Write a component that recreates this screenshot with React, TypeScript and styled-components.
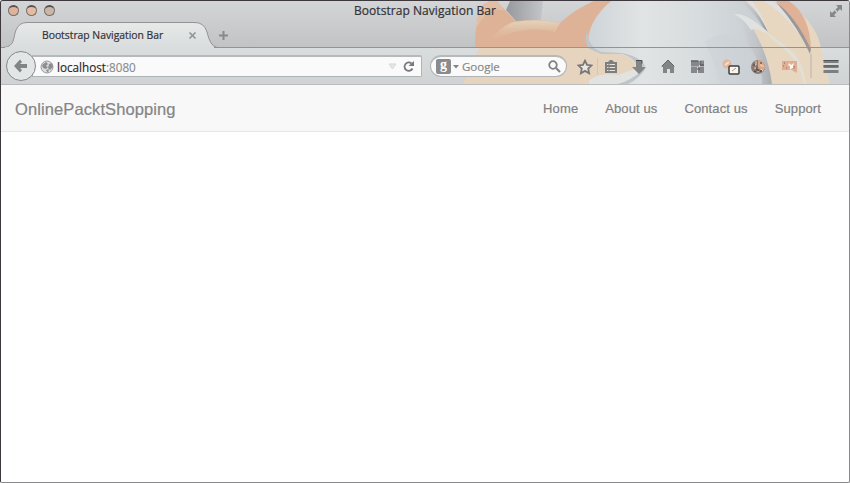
import React from "react";
import styled, { createGlobalStyle } from "styled-components";

const GlobalStyle = createGlobalStyle`
  * { box-sizing: border-box; }
  body { margin: 0; overflow: hidden; background: #fff; }
`;

const uiFont = `"Open Sans", "Noto Sans", sans-serif`;

const BrowserWindow = styled.main`
  width: 850px;
  height: 483px;
  display: flex;
  flex-direction: column;
  border: 1px solid #8a8a8c;
  border-top-color: #3c383d;
  border-left-color: #3c383d;
  border-radius: 3px 3px 2px 2px;
  background: #fff;
  overflow: hidden;
`;

const Chrome = styled.header`
  position: relative;
  flex: none;
  height: 84px;
  display: flex;
  flex-direction: column;
  background: linear-gradient(#d3d5d6 0, #c2c3c5 46px, #dadddd 47px, #cfd3d4 83px);
  border-bottom: 1px solid #b9bbbd;
  font-family: ${uiFont};
`;

const Artwork = styled.svg`
  position: absolute;
  inset: 0;
  width: 848px;
  height: 83px;
`;

const TitleBar = styled.div`
  position: relative;
  height: 21px;
  flex: none;
  display: grid;
  grid-template-columns: 100px 1fr 100px;
  align-items: center;
  padding: 0 7px 1px;
`;

const Lights = styled.div`
  display: flex;
  gap: 7px;
  margin-top: -1px;
`;

const Light = styled.span<{ $tone: string }>`
  width: 11px;
  height: 11px;
  border-radius: 50%;
  border: 1px solid #77706d;
  border-top: 2px solid #56504f;
  background: ${(p) => p.$tone};
`;

const Title = styled.div<{ $size: number; $spacing: number }>`
  font-size: ${(p) => p.$size}px;
  letter-spacing: ${(p) => p.$spacing}px;
  line-height: 16px;
  white-space: nowrap;
  color: #343236;
  text-align: center;
  -webkit-text-stroke: 0.2px #343236;
`;

const Expand = styled.svg`
  justify-self: end;
  width: 14px;
  height: 14px;
  margin-right: -1px;
`;

const TabStrip = styled.div`
  position: relative;
  height: 26px;
  flex: none;
  display: flex;
`;

const Tab = styled.div`
  width: 214px;
  display: flex;
  align-items: center;
  justify-content: space-between;
  padding: 0 17px 0 41px;
`;

const CloseIcon = styled.svg`
  width: 9px;
  height: 9px;
  flex: none;
  margin-right: 1px;
`;

const AddIcon = styled.svg`
  width: 11px;
  height: 11px;
  margin: 8px 0 0 3px;
`;

const Toolbar = styled.div`
  position: relative;
  height: 36px;
  flex: none;
  display: flex;
  align-items: center;
  padding: 0 11px 0 5px;
`;

const BackButton = styled.button`
  position: relative;
  z-index: 1;
  width: 30px;
  height: 30px;
  padding: 0;
  flex: none;
  display: grid;
  place-items: center;
  border: 1px solid #858789;
  border-radius: 50%;
  background: #e3e6e6;
`;

const Field = styled.div<{ $round?: boolean }>`
  display: flex;
  align-items: center;
  flex: none;
  height: 22px;
  width: ${(p) => (p.$round ? 137 : 390)}px;
  margin-left: ${(p) => (p.$round ? 8 : -4)}px;
  padding: ${(p) => (p.$round ? "0 5px" : "0 6px 0 7px")};
  border: 1px solid #b0b3b5;
  border-top: 2px solid #b6b9bb;
  border-radius: ${(p) => (p.$round ? "11px" : "0 2px 2px 0")};
  background: #fafafa;
`;

const FieldText = styled.div<{ $muted?: boolean }>`
  flex: 1;
  font-size: ${(p) => (p.$muted ? 11.5 : 11.7)}px;
  line-height: 16px;
  color: ${(p) => (p.$muted ? "#858587" : "#29272a")};
  -webkit-text-stroke: 0.15px currentColor;
`;

const Port = styled.span`
  color: #8a8b8d;
`;

const EngineBadge = styled.span`
  width: 15px;
  height: 15px;
  border-radius: 2px;
  background: #8a8b8c;
  color: #fff;
  font: bold 14px/11px "Liberation Serif", serif;
  text-align: center;
`;

const Glyph = styled.svg<{ $w?: number; $h?: number; $ml?: number }>`
  width: ${(p) => p.$w ?? 16}px;
  height: ${(p) => p.$h ?? 16}px;
  margin-left: ${(p) => p.$ml ?? 0}px;
  flex: none;
`;

const ActionGroup = styled.div`
  display: flex;
  align-items: center;
  padding-top: 1px;
`;

const Divider = styled.span`
  width: 1px;
  height: 17px;
  margin: 0 0 0 4px;
  background: #d0c6ba;
`;

const Navbar = styled.nav`
  height: 47px;
  flex: none;
  display: flex;
  align-items: center;
  justify-content: space-between;
  padding: 2px 28px 0 14px;
  background: #f8f8f8;
  border-bottom: 1px solid #e7e7e7;
  font-family: "Liberation Sans", Arial, sans-serif;
`;

const Brand = styled.a`
  font-size: 16.5px;
  letter-spacing: 0.1px;
  line-height: 20px;
  color: #858585;
  -webkit-text-stroke: 0.2px #858585;
`;

const Links = styled.div`
  display: flex;
  gap: 27px;
`;

const NavLink = styled.a`
  font-size: 13px;
  letter-spacing: 0.11px;
  line-height: 20px;
  color: #828282;
  -webkit-text-stroke: 0.2px #828282;
`;

const FoxArtwork = () => (
  <Artwork viewBox="1 1 848 83" aria-hidden="true">
    <defs>
      <linearGradient id="sky" x1="0" x2="1">
        <stop offset="0" stopColor="#cdd3d7" />
        <stop offset=".3" stopColor="#e1e4e4" />
        <stop offset=".6" stopColor="#d7dcde" />
        <stop offset="1" stopColor="#c5cacf" />
      </linearGradient>
      <linearGradient id="edge" x1="0" x2="1">
        <stop offset="0" stopColor="#97989b" />
        <stop offset="1" stopColor="#c3c5c8" />
      </linearGradient>
      <linearGradient id="crown" x1="0" x2="0" y1="0" y2="1">
        <stop offset="0" stopColor="#e4d3bd" />
        <stop offset=".5" stopColor="#e0bda1" />
        <stop offset="1" stopColor="#deb297" />
      </linearGradient>
      <linearGradient id="shade" x1="0" x2="1">
        <stop offset="0" stopColor="#c7c9cc" stopOpacity="0" />
        <stop offset=".6" stopColor="#b9bbbe" />
        <stop offset="1" stopColor="#939598" />
      </linearGradient>
      <linearGradient id="tab" x1="0" x2="0" y1="0" y2="1">
        <stop offset="0" stopColor="#e7e9e9" />
        <stop offset="1" stopColor="#dadddd" />
      </linearGradient>
    </defs>
    <path d="M586 48Q587 20 612 1H748Q770 30 774 84H586Z" fill="url(#sky)" />
    <path d="M510 1H543L541 20L517 22L506 10Z" fill="url(#edge)" />
    <path d="M475 48Q475 14 484 4L490 1H497Q506 12 516 21Q538 18 560 23Q575 9 594 1H611Q586 22 588 48Z" fill="#deb297" />
    <path d="M475 30Q477 11 484 4L490 1H497L505 11Q492 7 484 17Q479 23 475 30Z" fill="#e2c3aa" opacity=".7" />
    <path d="M491 40Q500 26 514 22Q538 18 560 23L555 32Q530 24 491 40Z" fill="url(#crown)" />
    <path d="M463 84L479 48H588Q593 53 608 53Q637 54 636 70Q625 77 605 80L590 84Z" fill="#e6d4bf" />
    <path d="M588 48Q584 39 587 30Q588 47 601 52L621 53Q640 56 645 66L637 70Q637 58 622 54L601 54Z" fill="#c0c5c9" />
    <path d="M589 81Q598 72 618 75Q632 70 643 66Q636 81 620 84H589Z" fill="#e1e3e1" />
    <path d="M642 70Q632 80 618 84H628Q640 78 646 68Z" fill="#bfc4c8" />
    <path d="M705 42Q720 31 738 36Q760 55 764 84H720Q716 66 705 42Z" fill="#cbd2d6" opacity=".5" />
    <path d="M737 18Q750 20 764 44L774 84H762Q763 66 748 43Q745 26 737 18Z" fill="url(#shade)" opacity=".65" />
    <path d="M746 1H784Q816 20 821 48L830 84H772Q769 60 758 38Q752 26 747 21L768 32Z" fill="#e7d7c1" />
    <path d="M740 1H748Q760 14 768 32L764 29Q756 14 740 1Z" fill="url(#shade)" />
    <path d="M746 1H752Q764 17 768 32Q760 13 746 1Z" fill="#e0e1df" />
    <path d="M734 14Q744 13 757 23L768 32L765 33Q755 27 751 30Q744 19 734 14Z" fill="#e0e2e1" />
    <path d="M760 28Q774 36 789 49Q802 58 806 84H804Q799 61 784 49Z" fill="#e2e0d6" />
    <path d="M764 1H772Q801 20 810 51Q790 17 764 1Z" fill="#dfe0df" />
    <path d="M776 1H789Q810 15 811 49Q802 28 776 1Z" fill="#dfb297" />
    <path d="M776 2Q796 17 811 49L810 54Q798 27 776 2Z" fill="#9c9895" />
    <path d="M811 54V78" stroke="#b9b2aa" />
    <path d="M0 47.5H4C15 46 13 38 16 30Q19 22 27 22.5H194Q204 22 207 32Q210 45 216 48H0Z" fill="url(#tab)" />
    <path d="M0 47.5H4C15 46 13 38 16 30Q19 22.5 27 22.5H194Q204 22 207 32Q210 46 217 47.5H850" fill="none" stroke="#929395" />
    <path d="M1 48H215" stroke="#dadddd" strokeWidth="1.5" />
    <path d="M1 47.5H5M214 47.5H218" stroke="#929395" />
  </Artwork>
);

const ToolbarIcons = () => (
  <ActionGroup>
    <Glyph $ml={10} viewBox="0 0 16 16">
      <path d="m8 1.7 2 4.2 4.6.5-3.4 3.1.9 4.7L8 11.9l-4.1 2.3.9-4.7-3.4-3.1L6 5.9Z" fill="#eee7df" stroke="#77777a" strokeWidth="1.8" />
    </Glyph>
    <Divider />
    <Glyph $ml={5} viewBox="0 0 16 16">
      <path d="M2 3h3l2-2h2l2 2h3v11H2Z" fill="#7d7e80" />
      <path d="M4 5.5h1.5m1 0H12M4 8.5h1.5m1 0H12M4 11.5h1.5m1 0H12" stroke="#e9e0d7" strokeWidth="1.2" />
    </Glyph>
    <Glyph $ml={12} viewBox="0 0 16 16">
      <path d="M5 1h6v7h4l-7 7-7-7h4Z" fill="#828486" />
      <path d="M5 1.5h6v3" fill="none" stroke="#4b4b4f" />
    </Glyph>
    <Glyph $ml={13} viewBox="0 0 16 16">
      <path d="M8 1 1 8h2v6h4v-4h3v4h4V8h1Z" fill="#828486" />
      <path d="m2 7 6-6 6 6" fill="none" stroke="#656669" />
    </Glyph>
    <Glyph $ml={14} viewBox="0 0 16 16">
      <path d="M1 1.5h8v6H1zm9 0h4v6h-4zM1 8h6v6H1zm7 0h6v6H8z" fill="#85878a" />
      <path d="M1 2h7M10 2v4h4M7 10h3" stroke="#505155" fill="none" />
    </Glyph>
    <Glyph $w={19} $h={18} $ml={15} viewBox="0 0 19 18">
      <circle cx="6" cy="6" r="4.5" fill="#e2b69a" />
      <path d="m4 7 4-3" stroke="#f2dfcf" strokeWidth="2" />
      <rect x="8" y="8" width="10" height="8" rx="1" fill="#f8f5ee" stroke="#413e3e" strokeWidth="1.5" />
      <path d="m11 13 4-3" stroke="#b59482" />
    </Glyph>
    <Glyph $ml={10} viewBox="0 0 16 16">
      <circle cx="8" cy="8" r="7" fill="#8a7a72" />
      <path d="M8 1a7 7 0 0 1 7 7 7 7 0 0 1-3 5L8 8Z" fill="#dba789" />
      <path d="M6 2v4H3m8-3v4h3M4 9h4v4m3-3 2 2" stroke="#ead3bf" fill="none" />
      <path d="M3 6h2m2 2v3h2m2-8v2M4 12l2 1m4-1h2" stroke="#4d494a" fill="none" strokeWidth="1.3" />
    </Glyph>
    <Glyph $w={17} $ml={15} viewBox="0 0 17 16">
      <path d="M1 2h15v10l-1 2-4-3H1Z" fill="#dfae93" />
      <path d="m8 4 2 2 3-2-1 3 2 3-3-1-2 2V7L7 6Z" fill="#fff7ed" />
      <path d="M3 4h1m1 5h1M2 7h1m10 0v3" stroke="#816f67" />
    </Glyph>
    <Glyph $ml={25} viewBox="0 0 16 16">
      <path d="M.5 2.5h15M.5 7.5h15M.5 12.5h15" stroke="#7d7e81" strokeWidth="2.8" />
      <path d="M.5 1.5h15M.5 7h15" stroke="#525357" />
    </Glyph>
  </ActionGroup>
);

export default function App() {
  return (
    <>
      <GlobalStyle />
      <BrowserWindow>
        <Chrome>
          <FoxArtwork />
          <TitleBar>
            <Lights>
              <Light $tone="#dfb39a" />
              <Light $tone="#e5bca2" />
              <Light $tone="#c9b6a8" />
            </Lights>
            <Title $size={12} $spacing={0.05}>Bootstrap Navigation Bar</Title>
            <Expand viewBox="0 0 14 14">
              <path d="M7 1h6v6l-2-2-3 3-2-2 3-3ZM1 7l2 2 3-3 2 2-3 3 2 2H1Z" fill="#85878a" />
              <path d="m6 6 2 2" stroke="#cfd1d3" strokeWidth="1.5" />
            </Expand>
          </TitleBar>
          <TabStrip>
            <Tab>
              <Title $size={10.4} $spacing={-0.03}>Bootstrap Navigation Bar</Title>
              <CloseIcon viewBox="0 0 9 9"><path d="m1.5 1.5 6 6m0-6-6 6" stroke="#929496" strokeWidth="1.7" /></CloseIcon>
            </Tab>
            <AddIcon viewBox="0 0 11 11"><path d="M5.5 1v9M1 5.5h9" stroke="#87898b" strokeWidth="2" /></AddIcon>
          </TabStrip>
          <Toolbar>
            <BackButton aria-label="Back">
              <Glyph viewBox="0 0 16 16"><path d="m7 1.5-6 6.5 6 6.5 2-2.5-2-2h7V6H7l2-2Z" fill="#828486" /></Glyph>
            </BackButton>
            <Field>
              <Glyph $w={14} $h={14} viewBox="0 0 14 14">
                <circle cx="7" cy="7" r="6" fill="#dadcdd" stroke="#999b9d" />
                <path d="m2 5 4-3 2 2-2 2 2 1-2 2-3-1Zm7-1 3-1 1 4-3 3-2-2Zm-3 6 3-1-1 4Z" fill="#8c8e90" />
              </Glyph>
              <Glyph $w={3} viewBox="0 0 3 16" />
              <FieldText>localhost<Port>:8080</Port></FieldText>
              <Glyph $w={9} $h={7} viewBox="0 0 9 7"><path d="M1 1h7L4.5 6Z" fill="#e5e6e6" stroke="#d4d6d7" /></Glyph>
              <Glyph $w={13} $h={14} $ml={5} viewBox="0 0 13 14"><path d="M9.5 3.5a4.2 4.2 0 1 0 1 5" fill="none" stroke="#77797c" strokeWidth="1.8" /><path d="M6.5 6H12V1Z" fill="#77797c" /></Glyph>
            </Field>
            <Field $round>
              <EngineBadge>g</EngineBadge>
              <Glyph $w={6} $h={5} $ml={2} viewBox="0 0 6 5"><path d="M0 1h6L3 4.5Z" fill="#838486" /></Glyph>
              <Glyph $w={3} viewBox="0 0 3 16" />
              <FieldText $muted>Google</FieldText>
              <Glyph $w={13} $h={14} viewBox="0 0 13 14"><circle cx="5" cy="5" r="3.8" fill="none" stroke="#818386" strokeWidth="1.8" /><path d="m8 8 4 4" stroke="#818386" strokeWidth="2.2" /></Glyph>
            </Field>
            <ToolbarIcons />
          </Toolbar>
        </Chrome>
        <Navbar>
          <Brand>OnlinePacktShopping</Brand>
          <Links>
            <NavLink>Home</NavLink>
            <NavLink>About us</NavLink>
            <NavLink>Contact us</NavLink>
            <NavLink>Support</NavLink>
          </Links>
        </Navbar>
      </BrowserWindow>
    </>
  );
}
